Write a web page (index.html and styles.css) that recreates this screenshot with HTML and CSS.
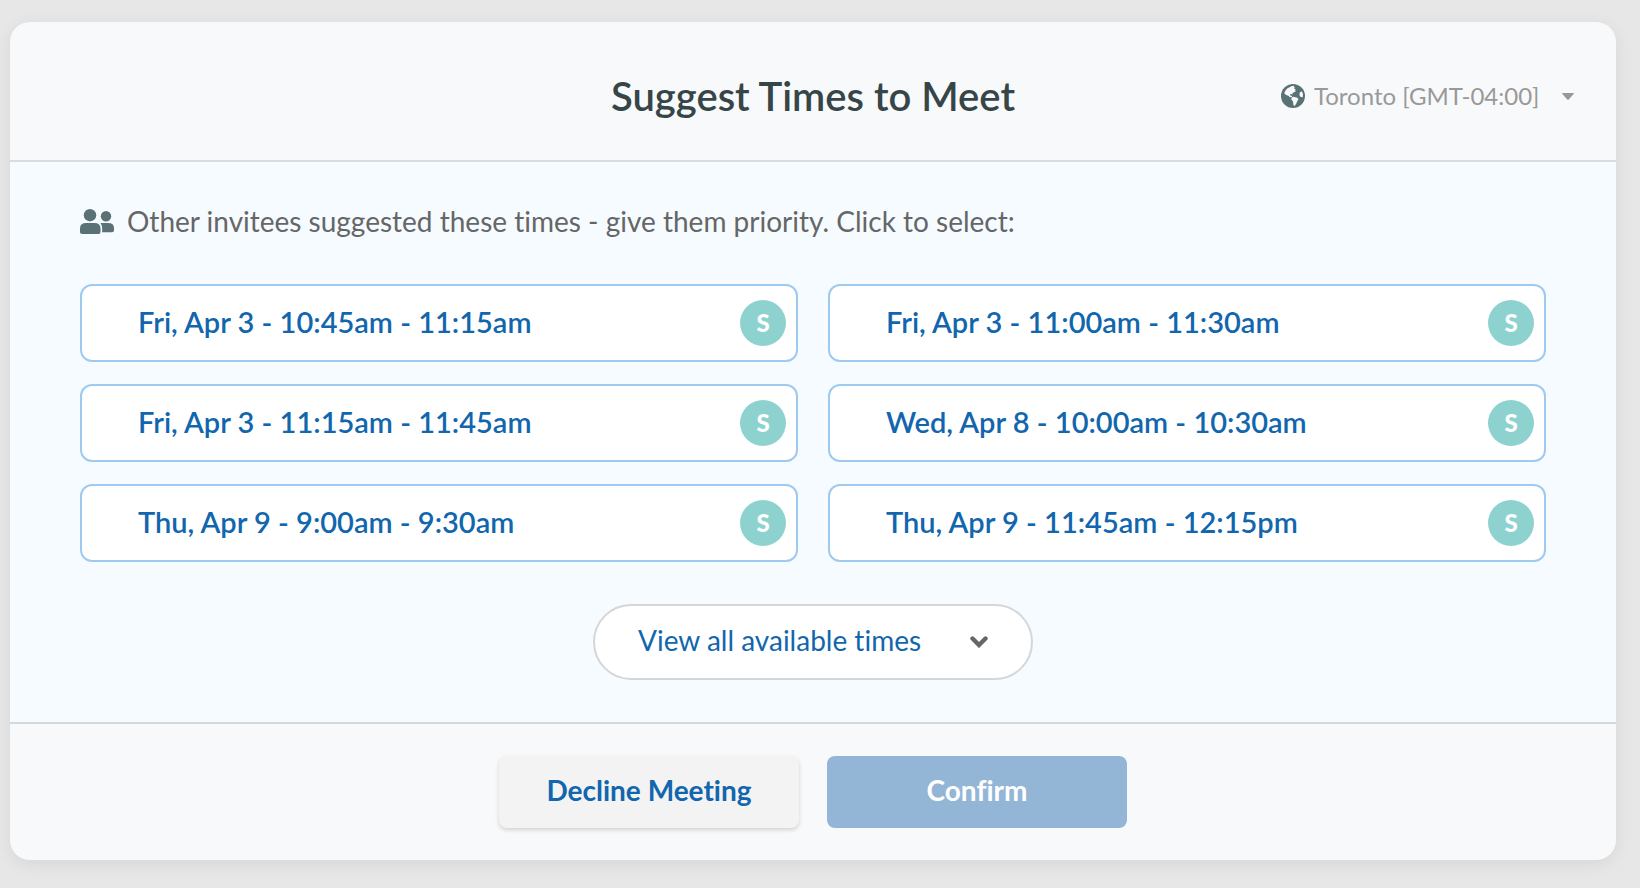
FILE: index.html
```html
<!DOCTYPE html>
<html lang="en">
<head>
<meta charset="utf-8">
<meta name="viewport" content="width=device-width, initial-scale=1">
<title>Suggest Times to Meet</title>
<link rel="stylesheet" href="styles.css">
</head>
<body>
<main class="card">
  <header class="card-header">
    <h1 class="title">Suggest Times to Meet</h1>
    <div class="timezone">
      <label class="globe-label" for="timezone">
        <svg class="globe" viewBox="0 0 24 24" role="img" aria-label="Time zone">
          <circle cx="12" cy="12" r="12" fill="#5a7176"/>
          <path fill="#f8f9fb" d="M12.600 1.800 10.300 2.300 8.500 3.200 6.200 4.500 4 7.200 3.300 9.500 5.200 11.100 7.900 11.900 8.700 13.200 11 12.900 11 11.900 9.300 11.400 9.100 10.500 10 9.800 11.300 10.700 11.500 9.200 13.200 8 14.900 7.400 14.100 6.400 14.600 5.200 13.200 4.700 13.600 3.600Z"/>
          <path fill="#f8f9fb" d="M10.600 13.600 12.300 12.700 16.400 13.800 17.500 15.300 16.100 17.400 15.300 19.600 13.700 21.900 12.400 21 12 17.600 10.400 15.400Z"/>
          <path fill="#f8f9fb" d="M20.500 7.200 18.800 8.600 18.400 11 19.600 12.900 21.800 13.200 22 10.300 21.300 8.300Z"/>
        </svg>
      </label>
      <select class="timezone-select" id="timezone">
        <option>Toronto [GMT-04:00]</option>
      </select>
      <svg class="caret" viewBox="0 0 12 7" aria-hidden="true"><path fill="#999" d="M.8 0h10.400q1.200 0 .4 1L7 6.300q-1 1-2 0L.4 1Q-.4 0 .8 0z"/></svg>
    </div>
  </header>

  <section class="card-body">
    <p class="hint">
      <svg class="people" viewBox="0 0 34 25" aria-hidden="true">
        <g fill="#5a7176">
          <circle cx="10" cy="6.200" r="6.200"/>
          <circle cx="26" cy="7.200" r="5.200"/>
          <path d="M0 23v-3.500Q0 14 6 14h8.500q6 0 6 5.500V23q0 2-2 2H2q-2 0-2-2z"/>
          <path d="M20.500 14H28q6 0 6 5v2.500q0 1.800-2 1.800h-9.800V20q0-3.600-1.700-6z"/>
        </g>
      </svg>
      <span>Other invitees suggested these times - give them priority. Click to select:</span>
    </p>

    <div class="slots">
      <button class="slot" type="button" aria-pressed="false"><span class="slot-time">Fri, Apr 3 - 10:45am - 11:15am</span><span class="avatar">S</span></button>
      <button class="slot" type="button" aria-pressed="false"><span class="slot-time">Fri, Apr 3 - 11:00am - 11:30am</span><span class="avatar">S</span></button>
      <button class="slot" type="button" aria-pressed="false"><span class="slot-time">Fri, Apr 3 - 11:15am - 11:45am</span><span class="avatar">S</span></button>
      <button class="slot" type="button" aria-pressed="false"><span class="slot-time">Wed, Apr 8 - 10:00am - 10:30am</span><span class="avatar">S</span></button>
      <button class="slot" type="button" aria-pressed="false"><span class="slot-time">Thu, Apr 9 - 9:00am - 9:30am</span><span class="avatar">S</span></button>
      <button class="slot" type="button" aria-pressed="false"><span class="slot-time">Thu, Apr 9 - 11:45am - 12:15pm</span><span class="avatar">S</span></button>
    </div>

    <button class="view-all" type="button">
      <span class="view-all-label">View all available times</span>
      <svg class="chevron" viewBox="0 0 18 12" aria-hidden="true"><path fill="none" stroke="#666" stroke-width="4.400" stroke-linecap="round" d="M2.500 2.500 9 9l6.500-6.500"/></svg>
    </button>
  </section>

  <footer class="card-footer">
    <button class="action decline" type="button">Decline Meeting</button>
    <button class="action confirm" type="button">Confirm</button>
  </footer>
</main>
</body>
</html>
```
FILE: styles.css
```css
* {
  box-sizing: border-box;
}

body {
  margin: 0;
  padding: 22px 24px 28px 10px;
  background: #e7e7e7;
  color: #666;
  font-family: Lato, sans-serif;
  font-size: 28px;
  line-height: 34px;
  font-variant-ligatures: none;
}

button,
select {
  margin: 0;
  font: inherit;
  font-variant-ligatures: none;
  cursor: pointer;
}

.card {
  border-radius: 20px;
  background: #f8f9fb;
  box-shadow: 0 4px 18px rgba(0, 0, 0, 0.07);
}

.card-header {
  display: grid;
  grid-template-columns: 1fr auto 1fr;
  align-items: center;
  padding: 50px 42px 40px;
  border-bottom: 2px solid #d9dbdd;
}

.title {
  grid-column: 2;
  margin: 0;
  color: #364547;
  font-size: 40px;
  font-weight: 600;
  line-height: 48px;
}

.timezone {
  display: grid;
  grid-template-columns: auto auto;
  align-items: center;
  justify-self: end;
  column-gap: 9px;
}

.globe-label {
  display: flex;
}

.globe {
  width: 24px;
  height: 24px;
}

.timezone-select {
  grid-area: 1 / 2;
  padding: 0 34px 0 0;
  border: 0;
  background: transparent;
  color: #999;
  font-size: 24px;
  line-height: 32px;
  appearance: none;
}

.caret {
  grid-area: 1 / 2;
  justify-self: end;
  width: 12px;
  height: 7px;
  pointer-events: none;
}

.card-body {
  display: flex;
  flex-direction: column;
  padding: 42px 70px;
  background: #f5fbff;
}

.hint {
  display: flex;
  align-items: center;
  gap: 13px;
  margin: 0 0 46px;
}

.people {
  flex: none;
  width: 34px;
  height: 25px;
}

.slots {
  display: grid;
  grid-template-columns: 1fr 1fr;
  gap: 22px 30px;
}

.slot {
  display: flex;
  align-items: center;
  justify-content: space-between;
  min-height: 78px;
  padding: 0 10px 0 56px;
  border: 2px solid #9ecaf0;
  border-radius: 12px;
  background: #fff;
  color: #1166ad;
  font-size: 29px;
  font-weight: 600;
  text-align: left;
}

.slot-time {
  padding-bottom: 2px;
}

.avatar {
  display: grid;
  place-items: center;
  flex: none;
  width: 46px;
  height: 46px;
  border-radius: 50%;
  background: #8ed2d0;
  color: #fff;
  font-size: 24px;
  font-weight: 900;
}

.view-all {
  display: flex;
  align-items: center;
  justify-content: space-between;
  align-self: center;
  gap: 42px;
  min-width: 440px;
  min-height: 76px;
  margin-top: 42px;
  padding: 0 43px;
  border: 2px solid #d5d6d7;
  border-radius: 38px;
  background: #fff;
  color: #1166ad;
}

.view-all-label {
  padding-bottom: 4px;
}

.chevron {
  width: 18px;
  height: 12px;
}

.card-footer {
  display: flex;
  justify-content: center;
  gap: 28px;
  padding: 32px;
  border-top: 2px solid #d5d8da;
}

.action {
  width: 300px;
  min-height: 72px;
  padding: 0 16px 4px;
  border: 0;
  border-radius: 8px;
  font-weight: 700;
}

.decline {
  background: #f3f3f3;
  box-shadow: 0 2px 4px rgba(0, 0, 0, 0.16);
  color: #1166ad;
}

.confirm {
  background: #93b6d7;
  color: #fff;
}
```
